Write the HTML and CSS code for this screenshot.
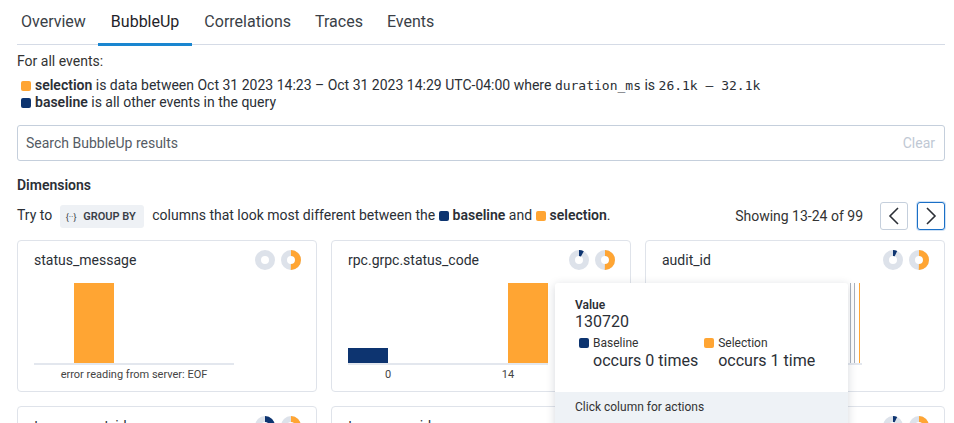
FILE: index.html
```html
<!DOCTYPE html>
<html>

<head>
    <meta charset="utf-8">
    <title>BubbleUp</title>
    <link rel="stylesheet" href="styles.css">
</head>

<body>

    <div class="page">

        <div class="tabs">
            <span class="tab first">Overview</span>
            <span class="tab active">BubbleUp</span>
            <span class="tab">Correlations</span>
            <span class="tab">Traces</span>
            <span class="tab">Events</span>
        </div>

        <p class="intro">For all events:</p>
        <div class="legend">
            <p><i class="sq sel"></i><b>selection</b> is data between Oct 31 2023 14:23 &ndash; Oct 31 2023 14:29 UTC-04:00 where <code>duration_ms</code> is <code>26.1k &ndash; 32.1k</code></p>
            <p><i class="sq base"></i><b>baseline</b> is all other events in the query</p>
        </div>

        <div class="search">
            <span class="placeholder">Search BubbleUp results</span>
            <span class="clear">Clear</span>
        </div>

        <h4 class="dims">Dimensions</h4>

        <div class="tryrow">
            <div class="hint">
                Try to
                <span class="chip"><span class="brace">{··}</span> GROUP BY</span>
                columns that look most different between the
                <i class="sq base"></i><b>baseline</b> and
                <i class="sq sel"></i><b>selection</b>.
            </div>
            <div class="pager">
                <span class="showing">Showing 13-24 of 99</span>
                <button class="pbtn">
                    <svg width="12" height="18" viewBox="0 0 12 18"><path d="M10 1 L2 9 L10 17" fill="none" stroke="#2b2f36" stroke-width="1.6"/></svg>
                </button>
                <button class="pbtn focus">
                    <svg width="12" height="18" viewBox="0 0 12 18"><path d="M2 1 L10 9 L2 17" fill="none" stroke="#2b2f36" stroke-width="1.6"/></svg>
                </button>
            </div>
        </div>

        <div class="grid">

            <div class="card">
                <div class="head">
                    <span class="title">status_message</span>
                    <span class="donuts">
                        <svg width="20" height="20" viewBox="0 0 20 20"><circle cx="10" cy="10" r="7" fill="none" stroke="#dde2ea" stroke-width="6"/></svg>
                        <svg width="20" height="20" viewBox="0 0 20 20"><circle cx="10" cy="10" r="7" fill="none" stroke="#dde2ea" stroke-width="6"/><circle cx="10" cy="10" r="7" fill="none" stroke="#ffa533" stroke-width="6" stroke-dasharray="22 44" transform="rotate(-90 10 10)"/></svg>
                    </span>
                </div>
                <div class="chart">
                    <div class="bar sel" style="left: 40px; height: 80px;"></div>
                </div>
                <div class="labels">
                    <span style="left: 100px;">error reading from server: EOF</span>
                </div>
            </div>

            <div class="card">
                <div class="head">
                    <span class="title">rpc.grpc.status_code</span>
                    <span class="donuts">
                        <svg width="20" height="20" viewBox="0 0 20 20"><circle cx="10" cy="10" r="7" fill="none" stroke="#dde2ea" stroke-width="6"/><circle cx="10" cy="10" r="7" fill="none" stroke="#0d3470" stroke-width="6" stroke-dasharray="3.5 44" transform="rotate(-90 10 10)"/></svg>
                        <svg width="20" height="20" viewBox="0 0 20 20"><circle cx="10" cy="10" r="7" fill="none" stroke="#dde2ea" stroke-width="6"/><circle cx="10" cy="10" r="7" fill="none" stroke="#ffa533" stroke-width="6" stroke-dasharray="22 44" transform="rotate(-90 10 10)"/></svg>
                    </span>
                </div>
                <div class="chart">
                    <div class="bar base" style="left: 0; height: 15px;"></div>
                    <div class="bar sel" style="left: 160px; height: 80px;"></div>
                </div>
                <div class="labels">
                    <span style="left: 40px;">0</span>
                    <span style="left: 160px;">14</span>
                </div>
            </div>

            <div class="card">
                <div class="head">
                    <span class="title">audit_id</span>
                    <span class="donuts">
                        <svg width="20" height="20" viewBox="0 0 20 20"><circle cx="10" cy="10" r="7" fill="none" stroke="#dde2ea" stroke-width="6"/><circle cx="10" cy="10" r="7" fill="none" stroke="#0d3470" stroke-width="6" stroke-dasharray="3 44" transform="rotate(-90 10 10)"/></svg>
                        <svg width="20" height="20" viewBox="0 0 20 20"><circle cx="10" cy="10" r="7" fill="none" stroke="#dde2ea" stroke-width="6"/><circle cx="10" cy="10" r="7" fill="none" stroke="#ffa533" stroke-width="6" stroke-dasharray="22 44" transform="rotate(-90 10 10)"/></svg>
                    </span>
                </div>
                <div class="chart">
                    <div class="line" style="left: 188px;"></div>
                    <div class="line" style="left: 192px;"></div>
                    <div class="line sel" style="left: 197px;"></div>
                </div>
                <div class="labels"></div>
            </div>

            <div class="card">
                <div class="head">
                    <span class="title">trace.parent_id</span>
                    <span class="donuts">
                        <svg width="20" height="20" viewBox="0 0 20 20"><circle cx="10" cy="10" r="7" fill="none" stroke="#dde2ea" stroke-width="6"/><circle cx="10" cy="10" r="7" fill="none" stroke="#0d3470" stroke-width="6" stroke-dasharray="22 44" transform="rotate(-90 10 10)"/></svg>
                        <svg width="20" height="20" viewBox="0 0 20 20"><circle cx="10" cy="10" r="7" fill="none" stroke="#dde2ea" stroke-width="6"/><circle cx="10" cy="10" r="7" fill="none" stroke="#ffa533" stroke-width="6" stroke-dasharray="22 44" transform="rotate(-90 10 10)"/></svg>
                    </span>
                </div>
            </div>

            <div class="card">
                <div class="head">
                    <span class="title">trace.span_id</span>
                    <span class="donuts">
                        <svg width="20" height="20" viewBox="0 0 20 20"><circle cx="10" cy="10" r="7" fill="none" stroke="#dde2ea" stroke-width="6"/><circle cx="10" cy="10" r="7" fill="none" stroke="#0d3470" stroke-width="6" stroke-dasharray="22 44" transform="rotate(-90 10 10)"/></svg>
                        <svg width="20" height="20" viewBox="0 0 20 20"><circle cx="10" cy="10" r="7" fill="none" stroke="#dde2ea" stroke-width="6"/><circle cx="10" cy="10" r="7" fill="none" stroke="#ffa533" stroke-width="6" stroke-dasharray="22 44" transform="rotate(-90 10 10)"/></svg>
                    </span>
                </div>
            </div>

            <div class="card">
                <div class="head">
                    <span class="title">trace.trace_id</span>
                    <span class="donuts">
                        <svg width="20" height="20" viewBox="0 0 20 20"><circle cx="10" cy="10" r="7" fill="none" stroke="#dde2ea" stroke-width="6"/><circle cx="10" cy="10" r="7" fill="none" stroke="#0d3470" stroke-width="6" stroke-dasharray="3 44" transform="rotate(-90 10 10)"/></svg>
                        <svg width="20" height="20" viewBox="0 0 20 20"><circle cx="10" cy="10" r="7" fill="none" stroke="#dde2ea" stroke-width="6"/><circle cx="10" cy="10" r="7" fill="none" stroke="#ffa533" stroke-width="6" stroke-dasharray="22 44" transform="rotate(-90 10 10)"/></svg>
                    </span>
                </div>
            </div>

            <!-- hover tooltip over the charts -->
            <div class="tip">
                <div class="tip-body">
                    <p class="tip-label">Value</p>
                    <p class="tip-value">130720</p>
                    <div class="tip-cols">
                        <div>
                            <p class="tip-key"><i class="sq base"></i>Baseline</p>
                            <p class="tip-count">occurs 0 times</p>
                        </div>
                        <div>
                            <p class="tip-key"><i class="sq sel"></i>Selection</p>
                            <p class="tip-count">occurs 1 time</p>
                        </div>
                    </div>
                </div>
                <div class="tip-foot">Click column for actions</div>
            </div>

        </div>

    </div>

</body>

</html>
```

FILE: styles.css
```css
body {
    margin: 0;
    background: #fff;
    color: #2b2f36;
    font-family: Roboto, "Liberation Sans", sans-serif;
    font-size: 14px;
    overflow: hidden;
}

p {
    padding: 0;
    margin: 0;
}

.page {
    padding: 0 9px 0 17px;
}

/* 标签页 */

.tabs {
    display: flex;
    height: 44px;
    border-bottom: 1px solid #d5dbe6;
}

.tab {
    padding: 12px 12px 0;
    font-size: 16px;
    line-height: 20px;
    color: #3a3f47;
}

.tab.first {
    padding-left: 4px;
}

.tab.active {
    padding: 12px 13px 0;
    border-bottom: 3px solid #1a86d0;
    margin-bottom: -2px;
    color: #1f2329;
}

.intro {
    margin-top: 8px;
    line-height: 16px;
    color: #333;
}

.legend {
    margin-top: 8px;
    padding-left: 4px;
    line-height: 16px;
}

.sq {
    display: inline-block;
    width: 10px;
    height: 10px;
    border-radius: 2px;
    margin-right: 4px;
    vertical-align: -1px;
}

.sq.sel {
    background: #ffa533;
}

.sq.base {
    background: #0d3470;
}

b {
    font-weight: 600;
}

code {
    font-family: "DejaVu Sans Mono", "Liberation Mono", monospace;
    font-size: 13px;
}

/* 搜索框 */

.search {
    margin-top: 15px;
    height: 34px;
    border: 1px solid #c5cfdc;
    border-radius: 3px;
    display: flex;
    align-items: center;
    justify-content: space-between;
    padding: 0 9px 0 8px;
}

.placeholder {
    color: #555b64;
}

.clear {
    color: #c0c8d4;
}

.dims {
    margin: 16px 0 0;
    font-size: 14px;
    font-weight: 600;
    line-height: 16px;
}

.tryrow {
    margin-top: 9px;
    display: flex;
    align-items: center;
    justify-content: space-between;
    height: 28px;
}

.chip {
    display: inline-block;
    background: #eef1f5;
    border-radius: 3px;
    padding: 0 8px 0 6px;
    margin: 0 5px 0 4px;
    height: 23px;
    line-height: 23px;
    font-size: 11px;
    font-weight: 600;
    color: #3a3f47;
}

.brace {
    font-size: 9px;
    font-weight: 400;
    margin-right: 4px;
}

.pager {
    display: flex;
    align-items: center;
}

.showing {
    margin-right: 8px;
    color: #333;
}

.pbtn {
    width: 28px;
    height: 28px;
    margin-left: 9px;
    background: #fff;
    border: 1px solid #c5cfdc;
    border-radius: 3px;
    display: flex;
    align-items: center;
    justify-content: center;
    padding: 0;
}

.pbtn.focus {
    border-color: #1a6fc6;
    box-shadow: 0 0 0 1px #cfe2f6;
}

/* 卡片 */

.grid {
    position: relative;
    margin-top: 10px;
    display: grid;
    grid-template-columns: repeat(3, 1fr);
    gap: 14px 14px;
}

.card {
    height: 150px;
    border: 1px solid #dfe3ea;
    border-radius: 4px;
    padding: 0 15px 0 16px;
}

.head {
    display: flex;
    justify-content: space-between;
    align-items: center;
    height: 24px;
    margin-top: 7px;
}

.title {
    font-size: 14px;
    color: #2b2f36;
}

.donuts {
    display: flex;
    gap: 6px;
}

.chart {
    position: relative;
    width: 200px;
    height: 80px;
    margin-top: 11px;
    border-bottom: 2px solid #e3e7ee;
}

.bar {
    position: absolute;
    bottom: 0;
    width: 40px;
}

.bar.sel {
    background: #ffa533;
}

.bar.base {
    background: #0d3470;
}

.line {
    position: absolute;
    bottom: 0;
    width: 1px;
    height: 80px;
    background: #a9b1bd;
}

.line.sel {
    background: #ffa533;
}

.labels {
    position: relative;
    width: 200px;
    height: 16px;
    margin-top: 3px;
    font-size: 11px;
    color: #444;
}

.labels span {
    position: absolute;
    top: 0;
    transform: translateX(-50%);
    white-space: nowrap;
}

/* 提示框 */

.tip {
    position: absolute;
    left: 538px;
    top: 43px;
    width: 293px;
    background: #fff;
    box-shadow: 0 2px 10px rgba(30, 40, 60, 0.18);
    border-radius: 3px;
}

.tip-body {
    padding: 14px 20px 21px;
}

.tip-label {
    font-size: 12px;
    font-weight: 600;
    line-height: 16px;
}

.tip-value {
    font-size: 16px;
    line-height: 18px;
}

.tip-cols {
    display: flex;
    gap: 6px;
    margin-top: 4px;
    padding-left: 4px;
}

.tip-key {
    font-size: 12px;
    line-height: 16px;
    color: #333;
}

.tip-key .sq {
    margin-right: 4px;
}

.tip-count {
    font-size: 16px;
    line-height: 20px;
    padding-left: 14px;
}

.tip-foot {
    background: #eef2f6;
    padding: 7px 20px 20px;
    font-size: 12px;
    line-height: 16px;
    color: #333;
}
```
